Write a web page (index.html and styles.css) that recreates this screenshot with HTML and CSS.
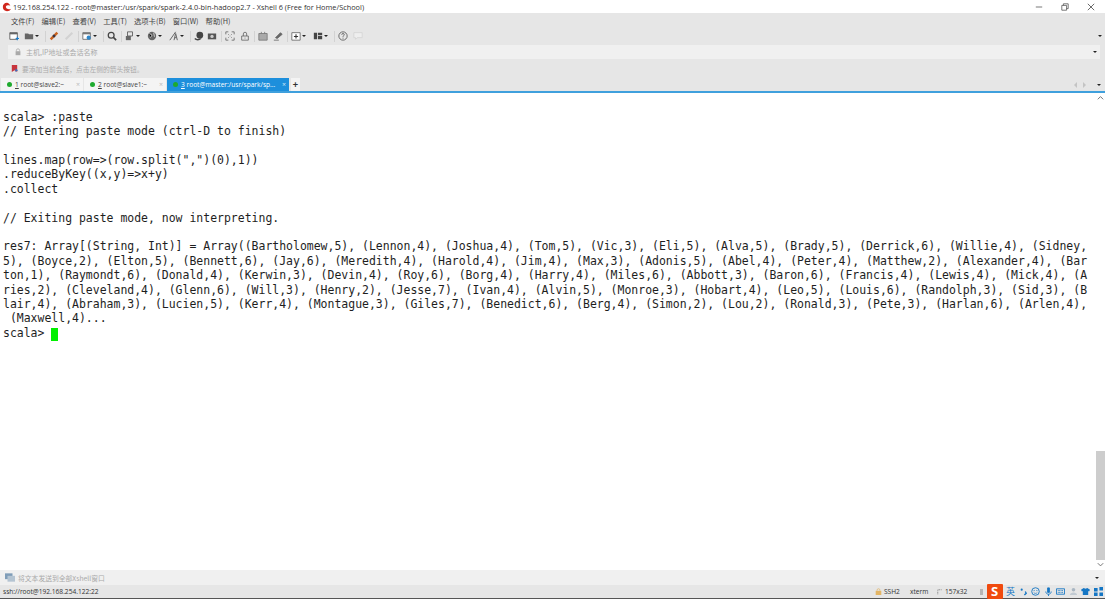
FILE: index.html
```html
<!DOCTYPE html>
<html lang="zh">
<head>
<meta charset="utf-8">
<title>Xshell 6</title>
<link rel="stylesheet" href="styles.css">
</head>
<body>
<div class="app">
  <header class="titlebar">
    <svg class="logo" viewBox="0 0 12 12" width="10" height="10"><path d="M6 1C3 1 1 3 1 6s2 5 5 5c2 0 4-1 5-3-2 1-5 1-6-1-1-1 0-3 2-3 1 0 2 0 3 1-.5-2-2.500-4-4-4z" fill="#d0281e"/></svg>
    <span class="title-text">192.168.254.122 - root@master:/usr/spark/spark-2.4.0-bin-hadoop2.7 - Xshell 6 (Free for Home/School)</span>
    <div class="winbtns">
      <svg viewBox="0 0 10 10"><path d="M1 5h8" stroke="#888" stroke-width="1.400"/></svg>
      <svg viewBox="0 0 10 10"><path d="M1 3h6v6H1zM3 3V1h6v6H7" fill="none" stroke="#555"/></svg>
      <svg viewBox="0 0 10 10"><path d="M1 1l8 8M9 1l-8 8" stroke="#555" stroke-width="1.100"/></svg>
    </div>
  </header>
  <nav class="menubar">
    <span>文件(F)</span><span>编辑(E)</span><span>查看(V)</span><span>工具(T)</span><span>选项卡(B)</span><span>窗口(W)</span><span>帮助(H)</span>
  </nav>
  <div class="toolbar">
    <svg class="ic" viewBox="0 0 12 12"><path d="M1 2h9v8H1z" fill="#fff" stroke="#555"/><path d="M1 2h9v2H1z" fill="#666"/><path d="M8 9h4M10 7v4" stroke="#1c7fd0" stroke-width="1.300"/></svg>
    <svg class="ic" viewBox="0 0 12 12"><path d="M1 3h4l1 1h5v6H1z" fill="#666"/></svg><i class="caret"></i>
    <b class="sep"></b>
    <svg class="ic" viewBox="0 0 12 12"><path d="M2 10l8-8" stroke="#c9631f" stroke-width="3"/><path d="M5 7l2-2" stroke="#334" stroke-width="3"/></svg>
    <svg class="ic" viewBox="0 0 12 12"><path d="M2 10l8-8" stroke="#d2d2d2" stroke-width="2.500"/></svg>
    <b class="sep"></b>
    <svg class="ic" viewBox="0 0 12 12"><path d="M1 2h9v8H1z" fill="#fff" stroke="#666"/><path d="M1 2h9v2H1z" fill="#777"/><circle cx="8" cy="8" r="2.500" fill="#2d86c9"/></svg><i class="caret"></i>
    <b class="sep"></b>
    <svg class="ic" viewBox="0 0 12 12"><circle cx="5" cy="5" r="3.500" fill="none" stroke="#444" stroke-width="1.500"/><path d="M8 8l3 3" stroke="#444" stroke-width="2"/></svg>
    <b class="sep"></b>
    <svg class="ic" viewBox="0 0 12 12"><path d="M3 1h6v5H3z" fill="none" stroke="#555"/><path d="M1 6h6v5H1z" fill="#666"/></svg><i class="caret"></i>
    <svg class="ic" viewBox="0 0 12 12"><circle cx="6" cy="6" r="5" fill="#666"/><path d="M3 3l3 2-2 3M8 2l1 5" stroke="#ddd"/></svg><i class="caret"></i>
    <svg class="ic" viewBox="0 0 12 12"><path d="M1 11L8 1M6 11l2-8 2 8M7 8h2" fill="none" stroke="#666" stroke-width="1.200"/></svg><i class="caret"></i>
    <b class="sep"></b>
    <svg class="ic tight" viewBox="0 0 12 12"><circle cx="7" cy="5" r="4" fill="#444"/><path d="M1 9c2 2 5 2 7 0" fill="none" stroke="#444" stroke-width="2"/></svg>
    <svg class="ic" viewBox="0 0 12 12"><path d="M1 3h10v7H1z" fill="#555"/><circle cx="6" cy="6.500" r="2" fill="#ccc"/></svg>
    <b class="sep"></b>
    <svg class="ic" viewBox="0 0 12 12"><path d="M1 4V1h3M8 1h3v3M11 8v3H8M4 11H1V8M4 4l1 1M8 4L7 5M4 8l1-1M8 8L7 7" fill="none" stroke="#666"/></svg>
    <svg class="ic" viewBox="0 0 12 12"><path d="M2 6h8v5H2z" fill="none" stroke="#666"/><path d="M4 6V3.500a2 2 0 014 0V6" fill="none" stroke="#666"/><path d="M6 8v1" stroke="#666"/></svg>
    <b class="sep"></b>
    <svg class="ic" viewBox="0 0 12 12"><path d="M1 3h10v8H1z" fill="#aaa" stroke="#777"/><path d="M4 3V1M8 3V1" stroke="#777"/></svg>
    <svg class="ic" viewBox="0 0 12 12"><path d="M1 11h6M3 8l6-6 2 2-6 5z" fill="#666" stroke="#666"/></svg>
    <b class="sep"></b>
    <svg class="ic" viewBox="0 0 12 12"><path d="M1 2h10v9H1z" fill="#fff" stroke="#666"/><path d="M3.500 6.500h5M6 4v5" stroke="#333" stroke-width="1.300"/></svg><i class="caret"></i>
    <svg class="ic" viewBox="0 0 12 12"><path d="M1 2h4v8H1zM6 2h5v3H6zM6 6h5v4H6z" fill="#444"/></svg><i class="caret"></i>
    <b class="sep"></b>
    <svg class="ic" viewBox="0 0 12 12"><circle cx="6" cy="6" r="5" fill="none" stroke="#555"/><path d="M4.500 4.500a1.500 1.500 0 113 0c0 1-1.500 1-1.500 2.500M6 8v1.200" fill="none" stroke="#555"/></svg>
    <svg class="ic" viewBox="0 0 12 12"><path d="M1 2h10v6H5l-2 2V8H1z" fill="#eee" stroke="#d4d4d4"/></svg>
    <i class="caret end"></i>
  </div>
  <div class="addressbar">
    <div class="address">
      <svg viewBox="0 0 10 10" width="8" height="8"><path d="M2 4h6v5H2z" fill="#aaa"/><path d="M3 4V3a2 2 0 014 0v1" fill="none" stroke="#aaa"/></svg>
      <span>主机,IP地址或会话名称</span>
      <i class="caret end"></i>
    </div>
  </div>
  <div class="hintbar">
    <svg viewBox="0 0 10 10" width="9" height="9"><path d="M2 1h6v8L5 7 2 9z" fill="#c8343c"/><path d="M6 5l3 2-3 2z" fill="#3b6fc0"/></svg>
    <span>要添加当前会话，点击左侧的箭头按钮。</span>
  </div>
  <div class="tabbar">
    <div class="tab"><i class="dot"></i><span class="tab-label"><u>1</u> root@slave2:~</span><span class="x">×</span></div>
    <div class="tab"><i class="dot"></i><span class="tab-label"><u>2</u> root@slave1:~</span><span class="x">×</span></div>
    <div class="tab active"><i class="dot"></i><span class="tab-label"><u>3</u> root@master:/usr/spark/sp...</span><span class="x">×</span></div>
    <div class="tab-add">+</div>
    <div class="tab-nav"><i class="tri-l"></i><i class="tri-r"></i><i class="caret"></i></div>
  </div>
  <main class="terminal">
<pre class="term-text">

scala&gt; :paste
// Entering paste mode (ctrl-D to finish)

lines.map(row=&gt;(row.split(",")(0),1))
.reduceByKey((x,y)=&gt;x+y)
.collect

// Exiting paste mode, now interpreting.

res7: Array[(String, Int)] = Array((Bartholomew,5), (Lennon,4), (Joshua,4), (Tom,5), (Vic,3), (Eli,5), (Alva,5), (Brady,5), (Derrick,6), (Willie,4), (Sidney,
5), (Boyce,2), (Elton,5), (Bennett,6), (Jay,6), (Meredith,4), (Harold,4), (Jim,4), (Max,3), (Adonis,5), (Abel,4), (Peter,4), (Matthew,2), (Alexander,4), (Bar
ton,1), (Raymondt,6), (Donald,4), (Kerwin,3), (Devin,4), (Roy,6), (Borg,4), (Harry,4), (Miles,6), (Abbott,3), (Baron,6), (Francis,4), (Lewis,4), (Mick,4), (A
ries,2), (Cleveland,4), (Glenn,6), (Will,3), (Henry,2), (Jesse,7), (Ivan,4), (Alvin,5), (Monroe,3), (Hobart,4), (Leo,5), (Louis,6), (Randolph,3), (Sid,3), (B
lair,4), (Abraham,3), (Lucien,5), (Kerr,4), (Montague,3), (Giles,7), (Benedict,6), (Berg,4), (Simon,2), (Lou,2), (Ronald,3), (Pete,3), (Harlan,6), (Arlen,4),
 (Maxwell,4)...
scala&gt; <span class="cursor">&nbsp;</span></pre>
    <div class="scrollbar">
      <svg class="sb-arrow" viewBox="0 0 10 8" width="9" height="9"><path d="M2 6l3-3 3 3" fill="none" stroke="#666"/></svg>
      <div class="sb-track"><div class="sb-thumb"></div></div>
      <svg class="sb-arrow" viewBox="0 0 10 8" width="9" height="10"><path d="M2 2l3 3 3-3" fill="none" stroke="#666"/></svg>
    </div>
  </main>
  <div class="sendbar">
    <svg viewBox="0 0 12 10" width="10" height="9"><path d="M0 0h9v7H0z" fill="#7f9db8"/><path d="M3 3h9v7H3z" fill="#b4c4d2"/></svg>
    <span>将文本发送到全部Xshell窗口</span>
    <i class="caret end"></i>
  </div>
  <footer class="statusbar">
    <span class="conn">ssh://root@192.168.254.122:22</span>
    <span class="stat ssh"><svg viewBox="0 0 10 10" width="7" height="7"><path d="M1 4h8v6H1z" fill="#e3b565"/><path d="M3 4V3a2 2 0 014 0v1" fill="none" stroke="#e3b565"/></svg>SSH2</span>
    <span class="stat term">xterm</span>
    <span class="stat size"><svg viewBox="0 0 8 8" width="6" height="6"><path d="M1 7V1h5" fill="none" stroke="#555" stroke-dasharray="1 1"/></svg>157x32</span>
    <span class="tray">
      <i class="tray-gray"></i>
      <span class="s-logo">S</span>
      <span class="t-blue">英</span>
      <svg viewBox="0 0 10 10"><circle cx="3" cy="3" r="1.200" fill="#1576c4"/><path d="M7 5l1 2-2 2" fill="none" stroke="#1576c4" stroke-width="1.500"/></svg>
      <svg viewBox="0 0 10 10"><circle cx="5" cy="5" r="4.200" fill="none" stroke="#1576c4"/><path d="M3 6c1 1.500 3 1.500 4 0" fill="none" stroke="#1576c4" stroke-width=".8"/><path d="M3.500 3.500v1M6.500 3.500v1" stroke="#1576c4"/></svg>
      <svg viewBox="0 0 10 10"><path d="M4 1h2v5H4z" fill="#1576c4" stroke="#1576c4"/><path d="M2 5c0 4 6 4 6 0M5 8v2" fill="none" stroke="#1576c4"/></svg>
      <svg viewBox="0 0 10 10"><path d="M.5 2h9v6h-9z" fill="none" stroke="#1576c4"/><path d="M2 4h6M2 6h6" stroke="#1576c4" stroke-dasharray="1 .6"/></svg>
      <svg viewBox="0 0 10 10"><circle cx="5" cy="3" r="2" fill="#a9b6c2"/><path d="M1 9c0-4 8-4 8 0z" fill="#c1cad2"/></svg>
      <svg viewBox="0 0 10 10"><path d="M3 1L0 3l1 2 1-.500V9h6V4.500L9 5l1-2-3-2-2 1z" fill="#1576c4"/></svg>
      <svg viewBox="0 0 10 10"><path d="M0 1h4v4H0zM6 0h4v4H6zM0 6h4v4H0zM6 6h4v4H6z" fill="#1576c4"/></svg>
    </span>
  </footer>
</div>
</body>
</html>
```
FILE: styles.css
```css
* { box-sizing: border-box; }
html, body { margin: 0; padding: 0; }
body { width: 1105px; height: 599px; overflow: hidden; background: #fff; }
.app {
  width: 1105px; height: 599px; display: flex; flex-direction: column;
  font-family: "Noto Sans CJK SC", "Noto Sans", sans-serif; color: #444;
}
.titlebar {
  height: 13px; background: #fff; display: flex; align-items: center; padding-left: 2px; flex: none;
  font-family: "Open Sans", "Liberation Sans", sans-serif; font-size: 7.35px; color: #333; white-space: nowrap;
}
.logo { flex: none; margin-right: 1px; }
.title-text { flex: 1; }
.winbtns { display: flex; gap: 18px; padding-right: 10px; }
.winbtns svg { width: 8px; height: 8px; }
.menubar {
  height: 15px; background: #e6e6e6; display: flex; align-items: center; gap: 7px; padding-left: 11px; font-size: 7.3px; color: #444; flex: none;
}
.menubar span { white-space: nowrap; }
.toolbar {
  height: 16px; background: #e6e6e6; display: flex; align-items: center; padding: 0 3px 0 8px; flex: none;
}
.ic { width: 12px; height: 12px; padding: 1px; flex: none; margin-right: 3px; }
.ic.tight { margin-right: 1px; }
.caret { width: 0; height: 0; flex: none; border: 2px solid transparent; border-top: 2.500px solid #222; border-bottom: 0; }
.toolbar .caret { margin-left: -3px; margin-right: 6px; }
.toolbar .caret.end, .caret.end { margin-left: auto; margin-right: 0; }
.sep { width: 1px; height: 11px; background: #d2d2d2; margin-right: 2px; flex: none; }
.addressbar { height: 16px; background: #e6e6e6; padding: 1px 5px 1px 8px; flex: none; }
.address {
  height: 14px; background: #f0f0f0; display: flex; align-items: center; gap: 4px; padding: 0 3px 0 6px; font-size: 7px; color: #aaa;
}
.hintbar { height: 17px; background: #e6e6e6; display: flex; align-items: center; gap: 3px; padding-left: 10px; font-size: 6.75px; color: #aaa; flex: none; }
.tabbar { height: 14px; background: #e6e6e6; display: flex; align-items: flex-end; padding-left: 1px; gap: 1px; flex: none; }
.tab {
  width: 82px; height: 13px; background: #f4f4f4; display: flex; align-items: center; padding: 0 3px 0 6px; font-size: 6.6px; color: #444;
  font-family: "Open Sans", "Liberation Sans", sans-serif; white-space: nowrap;
}
.tab.active { width: 122px; background: #1d8fdc; color: #fff; }
.tab-label { flex: 1; margin-left: 3px; }
.dot { width: 5px; height: 5px; border-radius: 50%; background: #1eaa2e; flex: none; }
.x { color: #bbb; font-size: 7px; }
.active .x { color: #cfe6f7; }
.tab-add { width: 9px; height: 13px; background: #f4f4f4; font-size: 9px; text-align: center; line-height: 13px; color: #333; font-weight: 700; margin-left: 1px; }
.tab-nav { margin-left: auto; display: flex; align-items: center; gap: 6px; height: 13px; padding-right: 4px; }
.tab-nav .caret { margin-left: 5px; }
.tri-l, .tri-r { width: 0; height: 0; border: 3px solid transparent; }
.tri-l { border-right: 3px solid #c4c4c4; border-left: 0; }
.tri-r { border-left: 3px solid #c4c4c4; border-right: 0; }
.terminal {
  flex: 1; min-height: 0; border-top: 2px solid #3fa0dd; background: #fff; display: flex;
}
.term-text {
  flex: 1; min-width: 0; margin: 0; padding: 2.4px 0 0 3px; font-family: "DejaVu Sans Mono", monospace; font-size: 11.47px; line-height: 14.4px; color: #1e1e1e; overflow: hidden;
}
.cursor { display: inline-block; width: 7px; height: 13px; background: #00f000; vertical-align: -2px; }
.scrollbar { width: 9px; flex: none; background: #fff; display: flex; flex-direction: column; align-items: center; }
.sb-track { flex: 1; width: 100%; display: flex; flex-direction: column; justify-content: flex-end; }
.sb-thumb { height: 109px; background: #cdcdcd; width: 100%; }
.sb-arrow { flex: none; }
.sendbar { height: 15px; background: #f0f0f0; display: flex; align-items: center; gap: 3px; padding: 0 6px 0 5px; font-size: 6.8px; color: #aaa; flex: none; }
.statusbar {
  height: 14px; background: #e6e6e6; display: flex; align-items: center; font-size: 6.6px; color: #333; padding-left: 3px; flex: none; border-bottom: 1px solid #555;
  font-family: "Open Sans", "Liberation Sans", sans-serif; white-space: nowrap;
}
.conn { width: 872px; }
.stat { display: flex; align-items: center; gap: 2px; }
.ssh { width: 35px; }
.term { width: 27px; }
.size { width: 43px; }
.tray { display: flex; align-items: center; gap: 3.5px; color: #1576c4; }
.tray svg { width: 9px; height: 9px; flex: none; }
.tray-gray { width: 3px; height: 6px; background: #b5b5b5; margin-right: 0; }
.s-logo { width: 16px; height: 15px; margin-left: 0; background: #f04a0e; color: #fff; font-weight: 700; font-size: 13px; text-align: center; line-height: 15px; border-radius: 1px; }
.t-blue { width: 9px; font-family: "Noto Sans CJK SC", sans-serif; font-size: 9px; line-height: 10px; }
```
